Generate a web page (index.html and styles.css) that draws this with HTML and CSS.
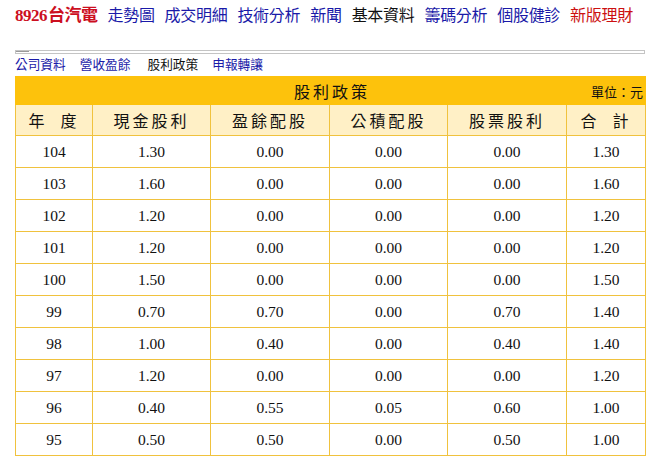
FILE: index.html
```html
<!DOCTYPE html>
<html lang="zh-Hant">
<head>
<meta charset="utf-8">
<link rel="stylesheet" href="styles.css">
</head>
<body>
<div class="topnav">
  <span class="stock"><b class="code">8926</b>台汽電</span>
  <a class="blue">走勢圖</a>
  <a class="blue">成交明細</a>
  <a class="blue">技術分析</a>
  <a class="blue">新聞</a>
  <a class="black">基本資料</a>
  <a class="blue">籌碼分析</a>
  <a class="blue">個股健診</a>
  <a class="red">新版理財</a>
</div>
<div class="rule"><span class="rule-mark"></span></div>
<div class="subnav">
  <a class="blue">公司資料</a>
  <a class="blue">營收盈餘</a>
  <a class="black">股利政策</a>
  <a class="blue">申報轉讓</a>
</div>
<table class="div-table">
  <colgroup>
    <col class="c1"><col class="c2"><col class="c3"><col class="c4"><col class="c5"><col class="c6">
  </colgroup>
  <tr class="title-row">
    <td colspan="6"><div class="title-wrap"><span class="title">股利政策</span><span class="unit">單位：元</span></div></td>
  </tr>
  <tr class="head-row">
    <th>年&nbsp;&nbsp;度</th><th>現金股利</th><th>盈餘配股</th><th>公積配股</th><th>股票股利</th><th>合&nbsp;&nbsp;計</th>
  </tr>
  <tr><td>104</td><td>1.30</td><td>0.00</td><td>0.00</td><td>0.00</td><td>1.30</td></tr>
  <tr><td>103</td><td>1.60</td><td>0.00</td><td>0.00</td><td>0.00</td><td>1.60</td></tr>
  <tr><td>102</td><td>1.20</td><td>0.00</td><td>0.00</td><td>0.00</td><td>1.20</td></tr>
  <tr><td>101</td><td>1.20</td><td>0.00</td><td>0.00</td><td>0.00</td><td>1.20</td></tr>
  <tr><td>100</td><td>1.50</td><td>0.00</td><td>0.00</td><td>0.00</td><td>1.50</td></tr>
  <tr><td>99</td><td>0.70</td><td>0.70</td><td>0.00</td><td>0.70</td><td>1.40</td></tr>
  <tr><td>98</td><td>1.00</td><td>0.40</td><td>0.00</td><td>0.40</td><td>1.40</td></tr>
  <tr><td>97</td><td>1.20</td><td>0.00</td><td>0.00</td><td>0.00</td><td>1.20</td></tr>
  <tr><td>96</td><td>0.40</td><td>0.55</td><td>0.05</td><td>0.60</td><td>1.00</td></tr>
  <tr><td>95</td><td>0.50</td><td>0.50</td><td>0.00</td><td>0.50</td><td>1.00</td></tr>
</table>
</body>
</html>
```
FILE: styles.css
```css
html, body { margin: 0; padding: 0; background: #fff; }
body {
  padding: 4px 0 0 15px;
  font-family: "Noto Sans CJK TC", "Noto Sans CJK SC", sans-serif;
  color: #000;
}
a { text-decoration: none; cursor: pointer; }
.blue { color: #1a1aa8; }
.black { color: #111; }
.red { color: #cc1111; }

.topnav {
  display: flex;
  align-items: baseline;
  gap: 10px;
  font-size: 16px;
  line-height: 20px;
  height: 20px;
  white-space: nowrap;
}
.stock {
  color: #cc0f1f;
  font-weight: bold;
  font-family: "Liberation Serif", "Noto Sans CJK TC", serif;
  font-size: 17px;
  letter-spacing: -0.5px;
}
.stock .code { font-family: "Liberation Serif", serif; font-size: 17px; margin-right: 1px; }
.topnav a { letter-spacing: -0.3px; }

.rule {
  margin-top: 26px;
  width: 628px;
  height: 2px;
  border: 1px solid #c4c4c4;
  position: relative;
}
.rule-mark {
  position: absolute;
  left: 0; top: 0;
  width: 13px; height: 1px;
  background: #9a9a9a;
}

.subnav {
  display: flex;
  gap: 14px;
  font-size: 12.7px;
  line-height: 16px;
  margin-top: 2px;
  height: 19px;
}
.subnav a:nth-child(3) { margin-left: 3px; }

.div-table {
  border-collapse: collapse;
  width: 630px;
  table-layout: fixed;
  font-family: "Liberation Serif", serif;
  font-size: 15.5px;
  margin-top: 1px;
}
.c1 { width: 77px; } .c2 { width: 118px; } .c3 { width: 119px; }
.c4 { width: 118px; } .c5 { width: 119px; } .c6 { width: 79px; }
.div-table td, .div-table th {
  border: 1px solid #f0c23e;
  text-align: center;
  padding: 0;
  height: 31px;
  color: #111;
}
.title-row td {
  background: #fdc20c;
  height: 27px;
  border-color: #fdc20c;
}
.title-wrap {
  position: relative;
  display: flex;
  justify-content: center;
  align-items: center;
  font-family: "Noto Sans CJK TC", sans-serif;
}
.title {
  font-size: 16px;
  letter-spacing: 3px;
  margin-left: 3px;
}
.unit {
  position: absolute;
  right: 2px;
  top: 50%;
  transform: translateY(-50%);
  font-size: 13px;
  letter-spacing: 0;
}
.head-row th {
  background: #fff0c6;
  font-weight: normal;
  font-family: "Noto Sans CJK TC", sans-serif;
  font-size: 16px;
  letter-spacing: 3px;
  height: 30px;
}
```
